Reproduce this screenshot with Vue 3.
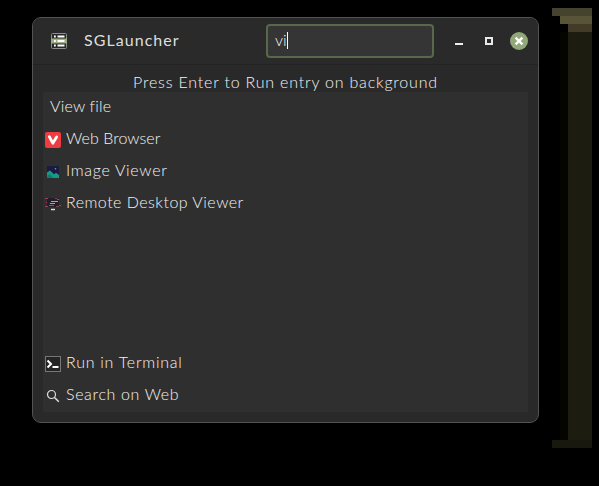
<script setup>
import { ref } from 'vue'

const query = ref('vi')
const results = [
  { label: 'Web Browser', icon: 'browser' },
  { label: 'Image Viewer', icon: 'image' },
  { label: 'Remote Desktop Viewer', icon: 'remote' },
]
const actions = [
  { label: 'Run in Terminal', icon: 'terminal' },
  { label: 'Search on Web', icon: 'web' },
]
</script>

<template>
  <div class="desktop">
    <main class="window">
      <header class="bar">
        <svg class="app-icon" viewBox="0 0 16 16">
          <rect x=".5" y=".5" width="15" height="15" rx="1" fill="#292929" stroke="#8b8d88" />
          <rect x="0" y="5.5" width="16" height="5" fill="#9caf82" />
          <path d="M3 3.5h1.8M3 8h1.8M3 12.5h1.8M6.5 3.5h7M6.5 8h7M6.5 12.5h7" stroke="#fff" stroke-width="2" />
        </svg>
        <h1 class="title">SGLauncher</h1>
        <div class="search"><span>{{ query }}</span><i class="caret"></i></div>
        <div class="controls">
          <svg class="minimize" viewBox="0 0 8 8"><path d="M0 7h8" stroke="#eee" stroke-width="2" /></svg>
          <svg class="maximize" viewBox="0 0 8 8"><rect x="1" y="1" width="6" height="6" fill="none" stroke="#e8e8e8" stroke-width="2" /></svg>
          <svg class="close" viewBox="0 0 18 18"><circle cx="9" cy="9" r="9" fill="#92a879" /><path d="m5.6 5.6 6.8 6.8m0-6.8-6.8 6.8" stroke="#fff" stroke-width="2.3" /></svg>
        </div>
      </header>
      <p class="hint">Press Enter to Run entry on background</p>
      <section class="list">
        <div class="row command"><span>View file</span></div>
        <div v-for="item in results" :key="item.label" class="row" :class="`row-${item.icon}`">
          <svg v-if="item.icon === 'browser'" class="icon" viewBox="0 0 16 16">
            <rect width="16" height="16" rx="2" fill="#ee3d40" />
            <path d="m4.3 4.7 3.5 6.5L11.6 5" fill="none" stroke="#fff" stroke-width="2.8" stroke-linecap="round" stroke-linejoin="round" />
          </svg>
          <svg v-else-if="item.icon === 'image'" class="icon" viewBox="0 0 16 16">
            <rect x="2" y="2" width="12" height="12" fill="#191b40" />
            <circle cx="10.5" cy="4.8" r=".8" fill="#9296ab" />
            <path d="m2 8.5 3-2 4 3.8 2-1.6 3 2.3V14H2z" fill="#159b82" />
            <path d="m2 12 3-2 3 4H2z" fill="#117d70" />
          </svg>
          <svg v-else class="icon" viewBox="0 0 16 16">
            <rect x="2" y="2" width="12" height="9" fill="#241e29" />
            <path d="M0 2.5h3M1 6.5h1M0 10.5h3M14 9.5h2" stroke="#a43d57" />
            <path d="M6 5.5h7M5 7.5h5" stroke="#a2aa9e" />
            <path d="M4 9.5h5M12 3.5h2" stroke="#567750" />
            <path d="M11 10.5h3M10 2.5h2" stroke="#7a4052" />
            <path d="M6 13.5h4" stroke="#ddd" stroke-width="1.6" />
          </svg>
          <span>{{ item.label }}</span>
        </div>
        <div class="space"></div>
        <div v-for="item in actions" :key="item.label" class="row" :class="`row-${item.icon}`">
          <svg v-if="item.icon === 'terminal'" class="icon" viewBox="0 0 16 16">
            <rect x=".5" y=".5" width="15" height="15" fill="#252525" stroke="#777" />
            <path d="m2.5 4.5 3.5 3.5-3.5 3.5M7.5 11h6" fill="none" stroke="#fff" stroke-width="2" />
          </svg>
          <svg v-else class="icon" viewBox="0 0 16 16">
            <circle cx="6.5" cy="6.5" r="4" fill="none" stroke="#ddd" stroke-width="1.2" />
            <path d="m9.5 9.5 4.3 4.3" stroke="#ddd" stroke-width="1.5" />
          </svg>
          <span>{{ item.label }}</span>
        </div>
      </section>
    </main>
    <div class="edge">
      <i class="top"></i><i class="highlight"></i><i class="brown"></i><i class="shade"></i><i class="bottom"></i>
    </div>
  </div>
</template>

<style>
body { background: #000; overflow: hidden; }
</style>

<style scoped>
* { box-sizing: border-box; }
.desktop { width: 599px; height: 486px; display: flex; align-items: flex-start; background: #000; color: #f4f4f4; font: 300 16px/20px Lato, "Noto Sans", sans-serif; }
.window { width: 507px; height: 406px; margin: 17px 0 0 32px; border: 1px solid #535353; border-radius: 9px; background: #292929; overflow: hidden; flex: none; }
.bar { height: 47px; display: flex; align-items: center; padding: 0 10px 0 18px; border-bottom: 1px solid #232323; background: #2a2a2a; }
.app-icon { width: 16px; height: 16px; }
.title { width: 182px; margin: -2px 0 0 17px; color: #dedede; font-size: 16px; line-height: 20px; font-weight: 400; letter-spacing: 1.05px; white-space: nowrap; }
.search { width: 168px; height: 34px; display: flex; align-items: center; padding: 0 0 2px 7px; border: 2px solid #58694b; border-radius: 4px; background: #353535; }
.caret { width: 1px; height: 17px; background: #fff; }
.controls { display: flex; align-items: center; margin-left: 21px; }
.minimize, .maximize { width: 8px; height: 8px; }
.maximize { margin-left: 22px; }
.close { width: 18px; height: 18px; margin-left: 17px; }
.hint { height: 27px; margin: 0; padding-top: 7px; text-align: center; letter-spacing: .8px; white-space: nowrap; }
.list { width: 485px; height: 320px; display: flex; flex-direction: column; margin-left: 10px; background: #2f2f2f; }
.row { height: 32px; display: flex; align-items: center; gap: 5px; padding-left: 2px; letter-spacing: .6px; white-space: nowrap; }
.row span { margin-bottom: 4px; }
.command { padding-left: 7px; letter-spacing: .2px; }
.row-browser { letter-spacing: .05px; }
.row-image { letter-spacing: .68px; }
.row-remote { letter-spacing: .48px; }
.row-terminal { letter-spacing: .75px; }
.row-web { letter-spacing: .65px; }
.icon { width: 16px; height: 16px; flex: none; }
.space { flex: 1; }
.edge { width: 40px; height: 440px; display: flex; flex-direction: column; align-items: flex-end; margin: 8px 0 0 13px; }
.top, .bottom { width: 40px; height: 8px; }
.top { background: #45432d; }
.highlight { width: 32px; height: 8px; background: #575438; }
.brown { width: 24px; height: 8px; background: #433a28; }
.shade { width: 32px; height: 408px; border-left: 8px solid #050500; background: #1c1c11; }
.bottom { background: #18180e; }
</style>
